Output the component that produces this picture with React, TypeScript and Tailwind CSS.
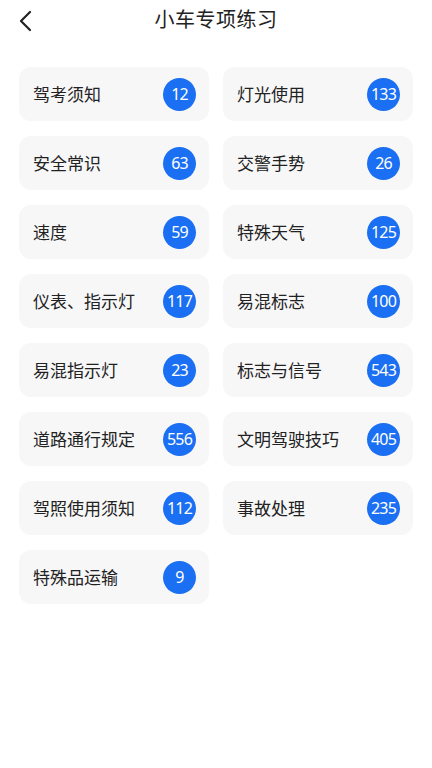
const items: [string, number][] = [
  ["驾考须知", 12],
  ["灯光使用", 133],
  ["安全常识", 63],
  ["交警手势", 26],
  ["速度", 59],
  ["特殊天气", 125],
  ["仪表、指示灯", 117],
  ["易混标志", 100],
  ["易混指示灯", 23],
  ["标志与信号", 543],
  ["道路通行规定", 556],
  ["文明驾驶技巧", 405],
  ["驾照使用须知", 112],
  ["事故处理", 235],
  ["特殊品运输", 9],
];

export default function App() {
  return (
    <div
      className="min-h-[768px] w-[432px] bg-white text-[#222]"
      style={{ fontFamily: '"Noto Sans CJK SC", "Noto Sans", sans-serif' }}
    >
      <header className="relative flex h-[38px] items-center justify-center">
        <button className="absolute left-[12px] top-[5px] p-1">
          <svg width="20" height="24" viewBox="0 0 20 24" fill="none">
            <path d="M14 3 L5 12 L14 21" stroke="#222" strokeWidth="2.2" strokeLinecap="round" strokeLinejoin="round" />
          </svg>
        </button>
        <h1 className="text-[20px] font-normal leading-none tracking-wide">小车专项练习</h1>
      </header>
      <div className="grid grid-cols-2 gap-x-[14px] gap-y-[15px] px-[19px] pt-[29px]">
        {items.map(([name, n]) => (
          <div
            key={name}
            className="flex h-[54px] items-center justify-between rounded-[12px] bg-[#f7f7f8] pl-[14px] pr-[13px]"
          >
            <span className="-mt-[2px] text-[17px] leading-none">{name}</span>
            <span
              className="flex h-[33px] w-[33px] items-center justify-center rounded-full bg-[#1b6ff2] text-[16px] leading-none tracking-[-0.8px] text-white"
              style={{ fontFamily: '"Noto Sans", Roboto, sans-serif' }}
            >
              {n}
            </span>
          </div>
        ))}
      </div>
    </div>
  );
}
